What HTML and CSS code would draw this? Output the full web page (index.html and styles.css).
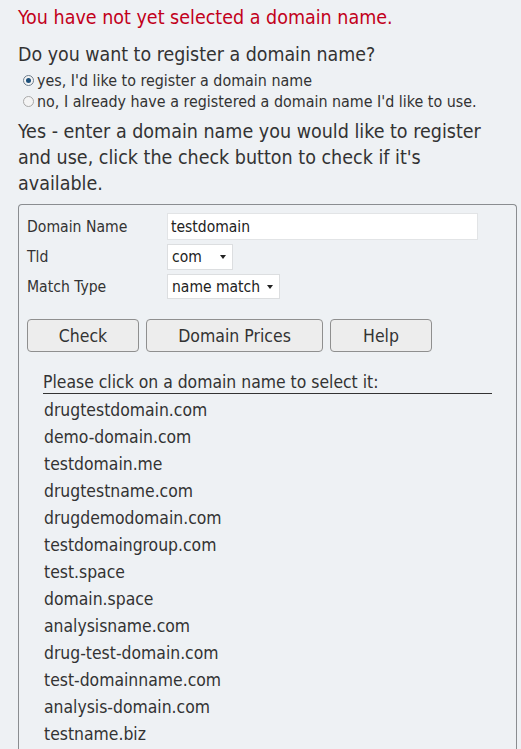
FILE: index.html
```html
<!DOCTYPE html>
<html>
<head>
<meta charset="utf-8">
<link rel="stylesheet" href="styles.css">
</head>
<body>
<div class="page">
  <p class="alert">You have not yet selected a domain name.</p>
  <p class="question">Do you want to register a domain name?</p>
  <div class="radios">
    <label class="radio"><span class="dot on"></span>yes, I'd like to register a domain name</label>
    <label class="radio"><span class="dot"></span>no, I already have a registered a domain name I'd like to use.</label>
  </div>
  <p class="intro">Yes - enter a domain name you would like to register and use, click the check button to check if it's available.</p>
  <div class="box">
    <div class="form">
      <span class="label">Domain Name</span>
      <div class="field text">testdomain</div>
      <span class="label">Tld</span>
      <div class="field select tld"><span>com</span><span class="arrow"></span></div>
      <span class="label">Match Type</span>
      <div class="field select match"><span>name match</span><span class="arrow"></span></div>
    </div>
    <div class="buttons">
      <button class="btn check">Check</button>
      <button class="btn prices">Domain Prices</button>
      <button class="btn help">Help</button>
    </div>
    <div class="results">
      <div class="rhead">Please click on a domain name to select it:</div>
      <ul class="list">
        <li>drugtestdomain.com</li>
        <li>demo-domain.com</li>
        <li>testdomain.me</li>
        <li>drugtestname.com</li>
        <li>drugdemodomain.com</li>
        <li>testdomaingroup.com</li>
        <li>test.space</li>
        <li>domain.space</li>
        <li>analysisname.com</li>
        <li>drug-test-domain.com</li>
        <li>test-domainname.com</li>
        <li>analysis-domain.com</li>
        <li>testname.biz</li>
      </ul>
    </div>
  </div>
</div>
</body>
</html>
```
FILE: styles.css
```css
html, body {
  margin: 0;
  padding: 0;
  background: #eef1f4;
  height: 749px;
  overflow: hidden;
}
body {
  font-family: "DejaVu Sans Condensed", "DejaVu Sans", sans-serif;
  color: #333;
}
.page {
  padding: 7px 4px 0 18px;
}
p { margin: 0; }
.alert {
  color: #c2001b;
  font-size: 19.5px;
  line-height: 22px;
}
.question {
  font-size: 19.4px;
  line-height: 22px;
  margin-top: 15px;
}
.radios {
  margin-top: 4px;
  padding-left: 5px;
  display: flex;
  flex-direction: column;
}
.radio {
  font-size: 15.9px;
  line-height: 21px;
  display: flex;
  align-items: center;
}
.dot {
  width: 9px;
  height: 9px;
  border: 1px solid #a9a9a9;
  border-radius: 50%;
  background: #f4f4f4;
  margin-right: 3px;
  display: inline-flex;
  align-items: center;
  justify-content: center;
  box-sizing: content-box;
}
.dot.on { border-color: #6d7d8c; }
.dot.on::after {
  content: "";
  width: 5px;
  height: 5px;
  border-radius: 50%;
  background: #1b4f7a;
}
.intro {
  font-size: 19.5px;
  line-height: 26px;
  margin-top: 7px;
  width: 480px;
}
.box {
  margin-top: 7px;
  border: 1px solid #8a8d90;
  border-bottom: none;
  border-radius: 4px 4px 0 0;
  padding: 8px 8px 0 8px;
  width: 481px;
  height: 544px;
  overflow: hidden;
}
.form {
  display: grid;
  grid-template-columns: 140px auto;
  row-gap: 4px;
  align-items: center;
  justify-items: start;
  font-size: 15.6px;
}
.label {
  line-height: 20px;
}
.field {
  background: #fff;
  box-sizing: border-box;
  font-size: 15.5px;
  color: #222;
}
.text {
  width: 311px;
  height: 27px;
  border: 1px solid #e2e4e6;
  padding: 3px 3px;
  line-height: 20px;
}
.select {
  height: 26px;
  border: 1px solid #dcdee0;
  display: flex;
  align-items: center;
  justify-content: space-between;
  padding: 0 6px 0 4px;
}
.tld { width: 66px; }
.match { width: 113px; height: 25px; }
.arrow {
  width: 0;
  height: 0;
  border-left: 3.5px solid transparent;
  border-right: 3.5px solid transparent;
  border-top: 4px solid #222;
}
.buttons {
  display: flex;
  gap: 7px;
  margin-top: 20px;
}
.btn {
  font-family: inherit;
  font-size: 17.5px;
  color: #333;
  height: 33px;
  background: #ededed;
  border: 1px solid #8f8f8f;
  border-radius: 4px;
  padding: 0;
}
.check { width: 112px; }
.prices { width: 177px; }
.help { width: 102px; }
.results {
  margin: 20px 0 0 16px;
  width: 449px;
}
.rhead {
  font-size: 17.4px;
  line-height: 20px;
  padding-bottom: 1px;
  border-bottom: 1px solid #333;
}
.list {
  list-style: none;
  margin: 3px 0 0 0;
  padding: 0 0 0 1px;
}
.list li {
  font-size: 17.4px;
  line-height: 27px;
}
```
